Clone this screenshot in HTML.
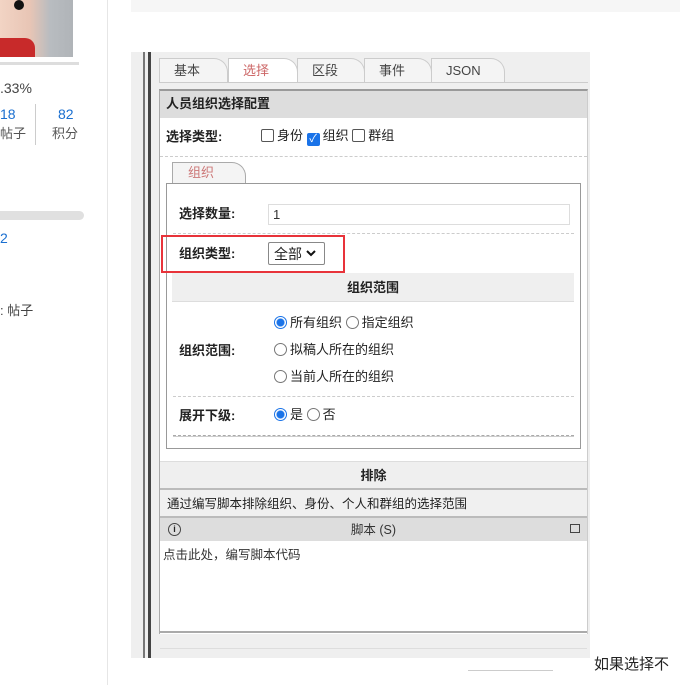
<!DOCTYPE html>
<html><head><meta charset="utf-8"><style>
*{margin:0;padding:0;box-sizing:border-box}
body{width:680px;height:685px;position:relative;overflow:hidden;background:#fff;font-family:"Liberation Sans","Noto Sans CJK SC",sans-serif;font-size:13px;color:#222;line-height:16px}
.a{position:absolute}
.b{font-weight:bold}
.tab{position:absolute;top:58px;height:24px;border:1px solid #ccc;border-bottom:none;border-radius:0 14px 0 0;background:#f4f4f4;font-size:13px;color:#444;padding:4px 0 0 14px}
.dash{position:absolute;height:0;border-top:1px dashed #ccc}
.rd{display:inline-block;width:13px;height:13px;border:1px solid #777;border-radius:50%;vertical-align:-2px;margin-right:3px;background:#fff}
.rd.on{border:1px solid #1a73e8;background:radial-gradient(circle,#1a73e8 3.5px,#fff 4.5px)}
.cb{display:inline-block;width:13px;height:13px;border:1px solid #555;border-radius:2px;vertical-align:-2px;margin-right:3px;background:#fff}
</style></head><body>
<div class="a" style="left:0;top:0;width:73px;height:57px;background:linear-gradient(90deg,#f2d4c4 0,#e8c5b5 30px,#b8bcc0 50px,#b0b4b8 73px)"></div>
<div class="a" style="left:0;top:38px;width:35px;height:19px;background:#c82a2a;border-radius:0 10px 0 0"></div>
<div class="a" style="left:14px;top:0;width:10px;height:10px;border-radius:50%;background:#111"></div>
<div class="a" style="left:0;top:62px;width:79px;height:3px;background:#ddd"></div>
<div class="a" style="left:0;top:80px;font-size:14px;color:#444">.33%</div>
<div class="a" style="left:0;top:106px;font-size:14px;color:#1a6fd0">18</div>
<div class="a" style="left:0;top:126px;font-size:13px;color:#555">帖子</div>
<div class="a" style="left:35px;top:104px;width:1px;height:41px;background:#ccc"></div>
<div class="a" style="left:58px;top:106px;font-size:14px;color:#1a6fd0">82</div>
<div class="a" style="left:52px;top:126px;font-size:13px;color:#555">积分</div>
<div class="a" style="left:0;top:211px;width:84px;height:9px;background:#e0e0e0;border-radius:0 5px 5px 0"></div>
<div class="a" style="left:0;top:230px;font-size:14px;color:#1a6fd0">2</div>
<div class="a" style="left:0;top:303px;font-size:13px;color:#444">: 帖子</div>
<div class="a" style="left:107px;top:0;width:1px;height:685px;background:#e6e6e6"></div>
<div class="a" style="left:131px;top:0;width:549px;height:12px;background:#f6f6f6"></div>
<div class="a" style="left:131px;top:52px;width:459px;height:606px;background:#efefef"></div>
<div class="a" style="left:143px;top:52px;width:2px;height:606px;background:#777"></div>
<div class="a" style="left:148px;top:52px;width:3px;height:606px;background:#444"></div>
<div class="tab" style="left:159px;width:69px">基本</div>
<div class="tab" style="left:228px;width:70px;background:#fff;color:#c66;height:25px">选择</div>
<div class="tab" style="left:297px;width:68px">区段</div>
<div class="tab" style="left:364px;width:68px">事件</div>
<div class="tab" style="left:431px;width:74px">JSON</div>
<div class="a" style="left:159px;top:82px;width:429px;height:1px;background:#ccc"></div>
<div class="a" style="left:159px;top:89px;width:429px;height:545px;background:#fff;border-top:2px solid #999;border-left:1px solid #aaa;border-right:1px solid #ccc"></div>
<div class="a b" style="left:160px;top:91px;width:427px;height:27px;background:#ddd;padding:5px 0 0 6px">人员组织选择配置</div>
<div class="a b" style="left:166px;top:129px">选择类型:</div>
<div class="a" style="left:261px;top:128px"><span class="cb"></span>身份 <span class="cb" style="background:#1a73e8;border-color:#1a73e8;color:#fff;font-size:11px;line-height:11px;text-align:center">✓</span>组织 <span class="cb"></span>群组</div>
<div class="dash" style="left:160px;top:156px;width:427px"></div>
<div class="a" style="left:172px;top:162px;width:74px;height:22px;border:1px solid #aaa;border-bottom:none;border-radius:0 14px 0 0;background:#f4f4f4;color:#c77;padding:2px 0 0 15px">组织</div>
<div class="a" style="left:166px;top:183px;width:415px;height:266px;border:1px solid #999"></div>
<div class="a b" style="left:179px;top:206px">选择数量:</div>
<div class="a" style="left:268px;top:204px;width:302px;height:21px;border:1px solid #ddd;padding:2px 0 0 4px;color:#333">1</div>
<div class="dash" style="left:173px;top:233px;width:401px"></div>
<div class="a b" style="left:179px;top:246px">组织类型:</div>
<div class="a" style="left:268px;top:242px;width:57px;height:23px;border:1px solid #888;border-radius:2px;padding:3px 0 0 5px;font-size:14px">全部 <svg width="10" height="8" style="vertical-align:1px"><path d="M1 1l4 4 4-4" stroke="#111" stroke-width="2" fill="none"/></svg></div>
<div class="a" style="left:161px;top:235px;width:184px;height:38px;border:2px solid #e8333a"></div>
<div class="a b" style="left:172px;top:273px;width:402px;height:29px;background:#efefef;border-bottom:1px solid #ddd;text-align:center;padding-top:7px">组织范围</div>
<div class="a" style="left:274px;top:315px"><span class="rd on"></span>所有组织 <span class="rd"></span>指定组织</div>
<div class="a" style="left:179px;top:343px" class="b"><b>组织范围:</b></div>
<div class="a" style="left:274px;top:342px"><span class="rd"></span>拟稿人所在的组织</div>
<div class="a" style="left:274px;top:369px"><span class="rd"></span>当前人所在的组织</div>
<div class="dash" style="left:173px;top:396px;width:401px"></div>
<div class="a b" style="left:179px;top:408px">展开下级:</div>
<div class="a" style="left:274px;top:407px"><span class="rd on"></span>是 <span class="rd"></span>否</div>
<div class="a" style="left:173px;top:435px;width:401px;height:2px;border-top:1px dashed #aaa;border-bottom:1px solid #ccc"></div>
<div class="a b" style="left:160px;top:461px;width:427px;height:29px;background:#efefef;border-top:1px solid #ddd;border-bottom:2px solid #bbb;text-align:center;padding-top:6px">排除</div>
<div class="a" style="left:160px;top:490px;width:427px;height:28px;background:#f0f0f0;border-bottom:2px solid #bbb;padding:6px 0 0 7px;font-size:12.5px">通过编写脚本排除组织、身份、个人和群组的选择范围</div>
<div class="a" style="left:160px;top:518px;width:427px;height:23px;background:#ddd;text-align:center;padding-top:4px;font-size:12.5px;color:#333">脚本 (S)</div>
<div class="a" style="left:168px;top:523px;width:13px;height:13px;border:1.5px solid #444;border-radius:50%;font-size:9px;line-height:10px;text-align:center;font-weight:bold">i</div>
<div class="a" style="left:570px;top:524px;width:10px;height:9px;border:1.5px solid #444"></div>
<div class="a" style="left:163px;top:547px;font-size:12.5px;color:#333">点击此处，编写脚本代码</div>
<div class="a" style="left:160px;top:631px;width:427px;height:2px;background:#aaa"></div>
<div class="a" style="left:160px;top:648px;width:427px;height:1px;background:#ddd"></div>
<div class="a" style="left:468px;top:670px;width:85px;height:1px;background:#ccc"></div>
<div class="a" style="left:594px;top:656px;font-size:15px;line-height:18px;color:#222">如果选择不</div>
</body></html>
